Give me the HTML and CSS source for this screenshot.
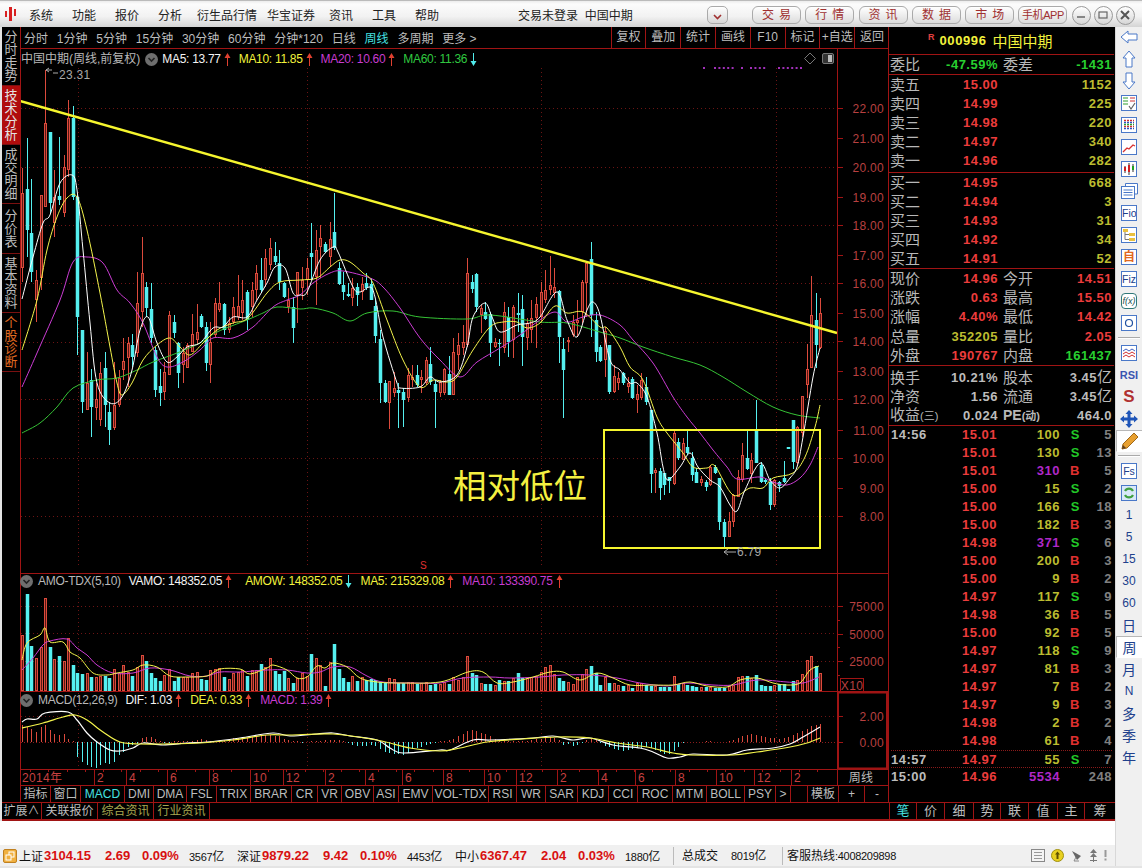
FILE: index.html
```html
<!DOCTYPE html>
<html>
<head>
    <title>中国中期 周线</title>
    <meta charset="utf-8">
    <link rel="stylesheet" href="styles.css">
</head>
<body>
    <svg class="defs">
        <symbol id="arrow-up" viewBox="0 0 7 13"><path d="M3.5 0 L6.5 5 H4 V13 H3 V5 H0.5 Z"/></symbol>
        <symbol id="arrow-down" viewBox="0 0 7 13"><path d="M3 0 H4 V8 H6.5 L3.5 13 L0.5 8 H3 Z"/></symbol>
        <symbol id="fold" viewBox="0 0 13 13"><circle cx="6.5" cy="6.5" r="6.5" fill="#6e6e6e"/><path d="M3.5 5 L6.5 8 L9.5 5" fill="none" stroke="#222" stroke-width="1.6"/></symbol>
    </svg>

    <header class="titlebar">
        <svg class="logo" width="12" height="14" viewBox="0 0 12 14">
            <rect x="0" y="4" width="2" height="6" fill="#d82020"/>
            <rect x="4" y="0" width="3" height="14" fill="#d82020"/>
            <rect x="9" y="2" width="2" height="7" fill="#d82020"/>
        </svg>
        <nav class="menu">
            <span>系统</span><span>功能</span><span>报价</span><span>分析</span><span>衍生品行情</span><span>华宝证券</span><span>资讯</span><span>工具</span><span>帮助</span>
        </nav>
        <div class="login">交易未登录&nbsp;&nbsp;中国中期</div>
        <button class="drop"><svg width="9" height="6" viewBox="0 0 9 6"><path d="M1 1 L4.5 4.5 L8 1" fill="none" stroke="#a03030" stroke-width="1.6"/></svg></button>
        <div class="top-btns">
            <button class="top-btn spaced">交易</button>
            <button class="top-btn spaced">行情</button>
            <button class="top-btn spaced">资讯</button>
            <button class="top-btn spaced">数据</button>
            <button class="top-btn spaced">市场</button>
            <button class="top-btn phone">手机APP</button>
            <button class="win-btn">
                <svg width="10" height="10" viewBox="0 0 10 10"><path d="M1 7 H9" stroke="#666" stroke-width="1.5"/></svg>
            </button>
            <button class="win-btn">
                <svg width="10" height="10" viewBox="0 0 10 10"><rect x="1" y="2" width="8" height="6" fill="none" stroke="#666" stroke-width="1.2"/></svg>
            </button>
            <button class="win-btn">
                <svg width="10" height="10" viewBox="0 0 10 10"><path d="M1 1 L9 9 M9 1 L1 9" stroke="#555" stroke-width="2"/></svg>
            </button>
        </div>
    </header>

    <div class="body-row">
        <div class="left-col">
            <div class="terminal">
                <aside class="side-tabs">
                    <div class="side-tab">分时走势</div>
                    <div class="side-tab active">技术分析</div>
                    <div class="side-tab">成交明细</div>
                    <div class="side-tab short">分价表</div>
                    <div class="side-tab">基本资料</div>
                    <div class="side-tab orange">个股诊断</div>
                </aside>

                <main class="chart-col">
                    <div class="periods">
                        <div class="period-list">
                            <span>分时</span><span>1分钟</span><span>5分钟</span><span>15分钟</span><span>30分钟</span><span>60分钟</span><span>分钟*120</span><span>日线</span><span class="cyan">周线</span><span>多周期</span><span>更多 &gt;</span>
                        </div>
                        <div class="period-tools">
                            <span>复权</span><span>叠加</span><span>统计</span><span>画线</span><span>F10</span><span>标记</span><span>+自选</span><span>返回</span>
                        </div>
                    </div>

                    <div class="plot">
                        <svg id="chart" class="chart" width="869" height="737" viewBox="20 49 869 737"></svg>

                        <div class="legend main-legend">
                            <span class="gray title">中国中期(周线,前复权)</span>
                            <svg class="fold"><use href="#fold"/></svg>
                            <span class="white item">MA5: 13.77<svg class="arr red-fill"><use href="#arrow-up"/></svg></span>
                            <span class="yellow item">MA10: 11.85<svg class="arr red-fill"><use href="#arrow-up"/></svg></span>
                            <span class="magenta item">MA20: 10.60<svg class="arr red-fill"><use href="#arrow-up"/></svg></span>
                            <span class="green item">MA60: 11.36<svg class="arr cyan-fill"><use href="#arrow-down"/></svg></span>
                        </div>

                        <div class="legend vol-legend">
                            <svg class="fold"><use href="#fold"/></svg>
                            <span class="gray">AMO-TDX(5,10)</span>
                            <span class="white item">VAMO: 148352.05<svg class="arr red-fill"><use href="#arrow-up"/></svg></span>
                            <span class="yellow item wide">AMOW: 148352.05<svg class="arr cyan-fill"><use href="#arrow-down"/></svg></span>
                            <span class="yellow item">MA5: 215329.08<svg class="arr red-fill"><use href="#arrow-up"/></svg></span>
                            <span class="magenta item">MA10: 133390.75<svg class="arr red-fill"><use href="#arrow-up"/></svg></span>
                        </div>

                        <div class="legend macd-legend">
                            <svg class="fold"><use href="#fold"/></svg>
                            <span class="gray">MACD(12,26,9)</span>
                            <span class="white item">DIF: 1.03<svg class="arr red-fill"><use href="#arrow-up"/></svg></span>
                            <span class="yellow item">DEA: 0.33<svg class="arr red-fill"><use href="#arrow-up"/></svg></span>
                            <span class="magenta item">MACD: 1.39<svg class="arr red-fill"><use href="#arrow-up"/></svg></span>
                        </div>

                        <div class="note">相对低位</div>
                    </div>

                    <div class="indicators">
                        <span>指标</span><span>窗口</span><span class="cyan">MACD</span><span>DMI</span><span>DMA</span><span>FSL</span><span>TRIX</span><span>BRAR</span><span>CR</span><span>VR</span><span>OBV</span><span>ASI</span><span>EMV</span><span>VOL-TDX</span><span>RSI</span><span>WR</span><span>SAR</span><span>KDJ</span><span>CCI</span><span>ROC</span><span>MTM</span><span>BOLL</span><span>PSY</span><span>&gt;</span><span></span><span>模板</span><span>+</span><span>-</span>
                    </div>
                </main>

                <section class="quote">
                    <div class="q-head"><sup>R</sup><b>000996</b><span>中国中期</span></div>

                    <div class="q-block ratio">
                        <div class="q-row"><label>委比</label><b class="up-g">-47.59%</b><label class="r">委差</label><b class="up-g">-1431</b></div>
                    </div>

                    <div class="q-block sell">
                        <div class="q-row"><label>卖五</label><b class="red">15.00</b><i></i><b class="olive">1152</b></div>
                        <div class="q-row"><label>卖四</label><b class="red">14.99</b><i></i><b class="olive">225</b></div>
                        <div class="q-row"><label>卖三</label><b class="red">14.98</b><i></i><b class="olive">220</b></div>
                        <div class="q-row"><label>卖二</label><b class="red">14.97</b><i></i><b class="olive">340</b></div>
                        <div class="q-row"><label>卖一</label><b class="red">14.96</b><i></i><b class="olive">282</b></div>
                    </div>

                    <div class="q-block buy">
                        <div class="q-row"><label>买一</label><b class="red">14.95</b><i></i><b class="olive">668</b></div>
                        <div class="q-row"><label>买二</label><b class="red">14.94</b><i></i><b class="olive">3</b></div>
                        <div class="q-row"><label>买三</label><b class="red">14.93</b><i></i><b class="olive">31</b></div>
                        <div class="q-row"><label>买四</label><b class="red">14.92</b><i></i><b class="olive">34</b></div>
                        <div class="q-row"><label>买五</label><b class="red">14.91</b><i></i><b class="olive">52</b></div>
                    </div>

                    <div class="q-block stats">
                        <div class="q-row"><label>现价</label><b class="red">14.96</b><label class="r">今开</label><b class="red">14.51</b></div>
                        <div class="q-row"><label>涨跌</label><b class="red">0.63</b><label class="r">最高</label><b class="red">15.50</b></div>
                        <div class="q-row"><label>涨幅</label><b class="red">4.40%</b><label class="r">最低</label><b class="red">14.42</b></div>
                        <div class="q-row"><label>总量</label><b class="olive">352205</b><label class="r">量比</label><b class="red">2.05</b></div>
                        <div class="q-row"><label>外盘</label><b class="red">190767</b><label class="r">内盘</label><b class="up-g">161437</b></div>
                    </div>

                    <div class="q-block funds">
                        <div class="q-row"><label>换手</label><b class="silver">10.21%</b><label class="r">股本</label><b class="silver">3.45<em>亿</em></b></div>
                        <div class="q-row"><label>净资</label><b class="silver">1.56</b><label class="r">流通</label><b class="silver">3.45<em>亿</em></b></div>
                        <div class="q-row"><label>收益<small>(三)</small></label><b class="silver">0.024</b><label class="r pe">PE<small>(动)</small></label><b class="silver">464.0</b></div>
                    </div>

                    <div class="trades">
                        <div class="t-row"><span class="t">14:56</span><b class="red">15.01</b><b class="olive">100</b><b class="s">S</b><b class="c">5</b></div>
                        <div class="t-row"><span class="t"></span><b class="red">15.01</b><b class="olive">130</b><b class="s">S</b><b class="c">13</b></div>
                        <div class="t-row"><span class="t"></span><b class="red">15.01</b><b class="purple">310</b><b class="b">B</b><b class="c">5</b></div>
                        <div class="t-row"><span class="t"></span><b class="red">15.00</b><b class="olive">15</b><b class="s">S</b><b class="c">2</b></div>
                        <div class="t-row"><span class="t"></span><b class="red">15.00</b><b class="olive">166</b><b class="s">S</b><b class="c">18</b></div>
                        <div class="t-row"><span class="t"></span><b class="red">15.00</b><b class="olive">182</b><b class="b">B</b><b class="c">3</b></div>
                        <div class="t-row"><span class="t"></span><b class="red">14.98</b><b class="purple">371</b><b class="s">S</b><b class="c">6</b></div>
                        <div class="t-row"><span class="t"></span><b class="red">15.00</b><b class="olive">200</b><b class="b">B</b><b class="c">3</b></div>
                        <div class="t-row"><span class="t"></span><b class="red">15.00</b><b class="olive">9</b><b class="b">B</b><b class="c">2</b></div>
                        <div class="t-row"><span class="t"></span><b class="red">14.97</b><b class="olive">117</b><b class="s">S</b><b class="c">9</b></div>
                        <div class="t-row"><span class="t"></span><b class="red">14.98</b><b class="olive">36</b><b class="b">B</b><b class="c">5</b></div>
                        <div class="t-row"><span class="t"></span><b class="red">15.00</b><b class="olive">92</b><b class="b">B</b><b class="c">5</b></div>
                        <div class="t-row"><span class="t"></span><b class="red">14.97</b><b class="olive">118</b><b class="s">S</b><b class="c">9</b></div>
                        <div class="t-row"><span class="t"></span><b class="red">14.97</b><b class="olive">81</b><b class="b">B</b><b class="c">3</b></div>
                        <div class="t-row"><span class="t"></span><b class="red">14.97</b><b class="olive">7</b><b class="b">B</b><b class="c">2</b></div>
                        <div class="t-row"><span class="t"></span><b class="red">14.97</b><b class="olive">9</b><b class="b">B</b><b class="c">3</b></div>
                        <div class="t-row"><span class="t"></span><b class="red">14.98</b><b class="olive">2</b><b class="b">B</b><b class="c">2</b></div>
                        <div class="t-row"><span class="t"></span><b class="red">14.98</b><b class="olive">61</b><b class="b">B</b><b class="c">4</b></div>
                        <div class="t-row dotted"><span class="t">14:57</span><b class="red">14.97</b><b class="olive">55</b><b class="s">S</b><b class="c">7</b></div>
                        <div class="t-row"><span class="t">15:00</span><b class="red">14.96</b><b class="purple">5534</b><b class="s"></b><b class="c">248</b></div>
                    </div>
                </section>
            </div>

            <div class="lower-tabs">
                <div class="ext-tabs">
                    <span>扩展∧</span><span>关联报价</span><span class="khaki">综合资讯</span><span class="khaki">行业资讯</span>
                </div>
                <div class="quote-tabs">
                    <span class="cyan">笔</span><span>价</span><span>细</span><span>势</span><span>联</span><span>值</span><span>主</span><span>筹</span>
                </div>
            </div>

            <div class="blank"></div>

            <footer class="status">
                <svg class="st-icon" width="14" height="14" viewBox="0 0 14 14">
                    <rect x="0.5" y="0.5" width="13" height="13" rx="1.5" fill="#f0b040" stroke="#c08020"/>
                    <rect x="6" y="3" width="5" height="5" fill="none" stroke="#fff"/>
                    <rect x="3" y="6" width="5" height="5" fill="#f0b040" stroke="#fff"/>
                </svg>
                <div class="idx"><span>上证</span><b>3104.15</b><b>2.69</b><b>0.09%</b><span class="amt">3567<em>亿</em></span></div>
                <div class="idx"><span>深证</span><b>9879.22</b><b>9.42</b><b>0.10%</b><span class="amt">4453<em>亿</em></span></div>
                <div class="idx"><span>中小</span><b>6367.47</b><b>2.04</b><b>0.03%</b><span class="amt">1880<em>亿</em></span></div>
                <div class="total"><span>总成交</span><span class="amt">8019<em>亿</em></span></div>
                <div class="hotline"><span>客服热线</span><span class="amt">:4008209898</span></div>
                <div class="st-tray">
                    <svg width="14" height="13" viewBox="0 0 14 13">
                        <rect x="0.5" y="0.5" width="13" height="12" fill="#f4f4f4" stroke="#888"/>
                        <path d="M3 3.5 H11 M3 6.5 H11 M3 9.5 H11" stroke="#999"/>
                    </svg>
                    <svg width="13" height="13" viewBox="0 0 13 13">
                        <circle cx="6.5" cy="6.5" r="6" fill="#e8d020" stroke="#a09010"/>
                        <path d="M6.5 2.5 L9 5.5 H7.5 V10 H5.5 V5.5 H4 Z" fill="#605000"/>
                    </svg>
                    <svg width="13" height="13" viewBox="0 0 13 13">
                        <path d="M2 2 L11 7 L7 11 Z" fill="#666"/>
                        <path d="M6 8 L4 12 H9" fill="none" stroke="#888"/>
                    </svg>
                    <svg width="9" height="13" viewBox="0 0 9 13">
                        <path d="M4.5 0 L8 4 H1 Z M4.5 4 L8 8 H1 Z M4 8 H5 V13 H4 Z M1 11 H8 V12 H1 Z" fill="#777"/>
                    </svg>
                    <svg width="3" height="11" viewBox="0 0 3 11">
                        <path d="M0.5 0 H2.5 V7 H0.5 Z M0.5 8.5 H2.5 V10.5 H0.5 Z" fill="#999"/>
                    </svg>
                </div>
            </footer>
        </div>

        <aside class="toolbar">
            <div class="tool"><svg width="18" height="16" viewBox="0 0 18 16"><path d="M1 8 L8 2 V5 H17 V11 H8 V14 Z" fill="#fff" stroke="#4a78c8"/></svg></div>
            <div class="tool"><svg width="16" height="18" viewBox="0 0 16 18"><path d="M8 1 L14 8 H11 V17 H5 V8 H2 Z" fill="#fff" stroke="#4a78c8"/></svg></div>
            <div class="tool"><svg width="16" height="18" viewBox="0 0 16 18"><path d="M8 17 L14 10 H11 V1 H5 V10 H2 Z" fill="#fff" stroke="#4a78c8"/></svg></div>
            <div class="tool"><svg width="16" height="16" viewBox="0 0 16 16"><rect x="0.5" y="0.5" width="15" height="15" fill="#fff" stroke="#4a78c8"/><path d="M2 3 H7 M2 6 H7 M2 9 H7" stroke="#30a030" stroke-width="1.2"/><path d="M9 3 H14 M9 6 H14" stroke="#d03030" stroke-width="1.2"/><path d="M8 11 L10 14 L14 8" fill="none" stroke="#606060" stroke-width="1.2"/></svg></div>
            <div class="tool"><svg width="16" height="16" viewBox="0 0 16 16"><rect x="0.5" y="0.5" width="15" height="15" fill="#fff" stroke="#4a78c8"/><path d="M3 3.5 H13 M3 9.5 H13" stroke="#d03030" stroke-width="1.5" stroke-dasharray="2 1"/><path d="M3 5.5 H13 M3 11.5 H13" stroke="#3050c0" stroke-width="1.5" stroke-dasharray="2 1"/><path d="M3 7.5 H13" stroke="#30a030" stroke-width="1.5" stroke-dasharray="2 1"/></svg></div>
            <div class="tool"><svg width="16" height="16" viewBox="0 0 16 16"><rect x="0.5" y="0.5" width="15" height="15" fill="#fff" stroke="#4a78c8"/><path d="M2 13 L6 9 L8 10 L12 6 L14 7" fill="none" stroke="#d83030" stroke-width="1.3"/></svg></div>
            <div class="tool"><svg width="16" height="16" viewBox="0 0 16 16"><rect x="0.5" y="0.5" width="15" height="15" fill="#fff" stroke="#4a78c8"/><path d="M4 5 V12 M8 2 V14 M12 3 V11" stroke="#333"/><rect x="3" y="6" width="2" height="4" fill="#d02020"/><rect x="7" y="4" width="2" height="7" fill="#d02020"/><rect x="11" y="5" width="2" height="4" fill="#20a020"/></svg></div>
            <div class="tool"><svg width="17" height="16" viewBox="0 0 17 16"><path d="M4.5 3 V0.5 H16.5 V11 H14" fill="#fff" stroke="#4a78c8"/><rect x="0.5" y="3.5" width="13" height="12" fill="#fff" stroke="#4a78c8"/><path d="M2.5 7 H11.5 M2.5 9.5 H11.5 M2.5 12 H11.5" stroke="#4a78c8"/></svg></div>
            <div class="tool"><span class="boxed">Fio</span></div>
            <div class="tool"><svg width="16" height="16" viewBox="0 0 16 16"><rect x="0.5" y="0.5" width="15" height="15" fill="#fff" stroke="#4a78c8"/><rect x="2" y="2" width="5" height="3" fill="#e8c040"/><rect x="8" y="6" width="6" height="3" fill="#e8c040"/><rect x="8" y="11" width="6" height="3" fill="#e8c040"/><path d="M4 5 V12.5 H8 M4 7.5 H8" fill="none" stroke="#777"/></svg></div>
            <div class="tool"><span class="boxed orange-text">自</span></div>
            <div class="tool"><span class="boxed">Fiz</span></div>
            <div class="tool"><span class="boxed fx">f(x)</span></div>
            <div class="tool"><svg width="16" height="16" viewBox="0 0 16 16"><rect x="0.5" y="0.5" width="15" height="15" fill="#fff" stroke="#4a78c8"/><circle cx="8" cy="8" r="3.5" fill="none" stroke="#2050a0" stroke-width="1.2"/></svg></div>
            <div class="tool-sep"></div>
            <div class="tool"><svg width="16" height="16" viewBox="0 0 16 16"><rect x="0.5" y="0.5" width="15" height="15" fill="#fff" stroke="#4a78c8"/><path d="M2 6 L5 4 L8 6 L11 4 L14 6" fill="none" stroke="#4060c0"/><path d="M2 9 L5 7 L8 9 L11 7 L14 9" fill="none" stroke="#d03030"/><path d="M2 12 L5 10 L8 12 L11 10 L14 12" fill="none" stroke="#d03030"/></svg></div>
            <div class="tool rsi">RSI</div>
            <div class="tool big-s">S</div>
            <div class="tool"><svg width="18" height="18" viewBox="0 0 18 18"><path d="M9 0 L12.5 4 H10.5 V7.5 H14 V5.5 L18 9 L14 12.5 V10.5 H10.5 V14 H12.5 L9 18 L5.5 14 H7.5 V10.5 H4 V12.5 L0 9 L4 5.5 V7.5 H7.5 V4 H5.5 Z" fill="#1f55b8"/></svg></div>
            <div class="tool pressed"><svg width="18" height="18" viewBox="0 0 18 18"><path d="M13 1 L17 5 L6 16 L1 17 L2 12 Z" fill="#e8a030" stroke="#a06818"/><path d="M1 17 L2 13 L5 16 Z" fill="#604020"/></svg></div>
            <div class="tool-sep"></div>
            <div class="tool"><span class="boxed">Fs</span></div>
            <div class="tool"><svg width="16" height="16" viewBox="0 0 16 16"><rect x="0.5" y="0.5" width="15" height="15" fill="#d8e8f8" stroke="#4a78c8"/><path d="M4 6 A4.5 4.5 0 0 1 12 6 M12 10 A4.5 4.5 0 0 1 4 10" fill="none" stroke="#40a040" stroke-width="2.2"/></svg></div>
            <div class="tool num">1</div>
            <div class="tool num">5</div>
            <div class="tool num">15</div>
            <div class="tool num">30</div>
            <div class="tool num">60</div>
            <div class="tool han">日</div>
            <div class="tool han pressed">周</div>
            <div class="tool han">月</div>
            <div class="tool num">N</div>
            <div class="tool han">多</div>
            <div class="tool han">季</div>
            <div class="tool han">年</div>
        </aside>
    </div>

    <script src="chart.js"></script>
</body>
</html>
```

FILE: styles.css
```css
* {
    box-sizing: border-box;
}
html, body {
    margin: 0;
    padding: 0;
}
body {
    width: 1142px;
    height: 868px;
    overflow: hidden;
    background-color: #e4e4e4;
    color: #bdbdbd;
    font-family: "Liberation Sans", "Noto Sans CJK SC", sans-serif;
    font-size: 12px;
}
.defs {
    display: none;
}
button {
    font-family: inherit;
    cursor: pointer;
}
em, i {
    font-style: normal;
}

/* top window bar */
.titlebar {
    height: 27px;
    display: grid;
    grid-template-columns: 29px 489px 189px 45px 1fr;
    align-items: center;
    background: linear-gradient(#ececec 0, #fcfcfc 3px, #f2f2f2 60%, #d4d4d4 100%);
    border-top: 1px solid #bbb;
    color: #222;
}
.logo {
    margin-left: 5px;
}
.menu {
    display: grid;
    grid-template-columns: 43px 43px 43px 39px 70px 62px 43px 43px auto;
}
.login {
    color: #222;
}
.drop {
    width: 21px;
    height: 18px;
    margin-top: 2px;
    padding: 0;
    border: 1px solid #aaa;
    border-radius: 5px;
    background: linear-gradient(#fff, #d8d8d8);
}
.top-btns {
    display: flex;
    align-items: center;
    margin-top: 2px;
}
.top-btn {
    width: 49px;
    height: 18px;
    margin-right: 4.3px;
    padding: 0;
    border: 1px solid #aaa;
    border-radius: 6px;
    background: linear-gradient(#fff, #dcdcdc);
    color: #a03030;
    font-size: 12px;
    line-height: 15px;
    white-space: nowrap;
}
.top-btn.spaced {
    letter-spacing: 5px;
    text-indent: 5px;
}
.top-btn.phone {
    font-size: 11px;
    letter-spacing: -0.4px;
}
.win-btn {
    width: 19px;
    height: 19px;
    margin-right: 3px;
    padding: 0;
    border: 1px solid #999;
    border-radius: 50%;
    background: linear-gradient(#fff, #d6d6d6);
    display: flex;
    align-items: center;
    justify-content: center;
}

/* page below the title bar */
.body-row {
    display: flex;
    height: 839px;
}
.left-col {
    width: 1115px;
    padding-left: 2px;
    display: flex;
    flex-direction: column;
}
.terminal {
    display: flex;
    height: 775px;
    background-color: #000;
}

.side-tabs {
    width: 18px;
    flex: none;
}
.side-tab {
    padding: 3px 2px;
    border-bottom: 1px solid #7a1010;
    font-size: 13px;
    line-height: 13px;
    color: #bdbdbd;
    text-align: center;
}
.side-tab.short {
    padding: 5px 2px;
}
.side-tab.active {
    background-color: #b00c0c;
    color: #e4e4e4;
}
.side-tab.orange {
    color: #e06a20;
}

.chart-col {
    width: 869px;
    flex: none;
    display: flex;
    flex-direction: column;
    border-left: 1px solid #a01414;
    margin-right: -1px;
}
.periods {
    height: 22px;
    display: flex;
    align-items: center;
    justify-content: space-between;
    border-bottom: 1px solid #a01414;
}
.period-list {
    display: flex;
    gap: 8.8px;
    padding-left: 3px;
}
.period-tools {
    display: flex;
    height: 100%;
}
.period-tools span {
    width: 34.8px;
    text-align: center;
    border-left: 1px solid #a01414;
    line-height: 21px;
}
.cyan {
    color: #45e0e0;
}
.plot {
    position: relative;
    height: 737px;
    margin-left: -1px;
}
.chart {
    display: block;
}
.legend {
    position: absolute;
    display: flex;
    align-items: center;
    white-space: nowrap;
    line-height: 16px;
    letter-spacing: -0.3px;
}
.main-legend {
    top: 2px;
    left: 1px;
}
.main-legend .title {
    letter-spacing: 0;
}
.vol-legend {
    top: 524px;
    left: 0;
}
.macd-legend {
    top: 643px;
    left: 0;
}
.legend .fold {
    width: 13px;
    height: 13px;
    margin: 0 0 0 5px;
}
.vol-legend .fold, .macd-legend .fold {
    margin: 0 5px 0 0;
}
.legend .item {
    display: inline-flex;
    align-items: center;
    margin-left: 4px;
    gap: 3px;
}
.vol-legend .item:nth-of-type(2), .macd-legend .item:nth-of-type(2) {
    margin-left: 8px;
}
.legend .item + .item {
    margin-left: 8px;
}
.legend .item.wide {
    margin-left: 13px;
}
.arr {
    width: 7px;
    height: 13px;
}
.red-fill { fill: #e04030; }
.cyan-fill { fill: #50eaea; }
.white { color: #f4f4f4; }
.gray { color: #b8b8b8; }
.yellow { color: #f2f23c; }
.magenta { color: #c83cd0; }
.green { color: #30c840; }
.note {
    position: absolute;
    left: 433px;
    top: 416px;
    font-size: 33.5px;
    line-height: 44px;
    color: #f4f040;
}

.indicators {
    height: 17px;
    display: grid;
    grid-template-columns: 30px 30px 44px 29px 33px 30px 34px 41px 26px 24px 32px 25px 34px 56px 28px 29px 32px 31px 29px 35px 34px 38px 31px 15px 17px 31px 26px 25px;
    margin-left: -1px;
}
.indicators span {
    text-align: center;
    line-height: 16px;
    border-left: 1px solid #a01414;
    white-space: nowrap;
    overflow: hidden;
}

/* quote column */
.quote {
    width: 226px;
    flex: none;
    display: flex;
    flex-direction: column;
    border-left: 1px solid #a01414;
    color: #b8b8b8;
}
.q-head {
    height: 28px;
    padding-left: 39px;
    display: flex;
    align-items: center;
    border-bottom: 1px solid #a01414;
    color: #f2f23c;
}
.q-head sup {
    color: #e04040;
    font-size: 9px;
    font-weight: bold;
    margin: -8px 5px 0 0;
}
.q-head b {
    font-size: 13px;
    letter-spacing: 0.6px;
    margin-right: 6px;
}
.q-head span {
    font-size: 15px;
}
.q-block {
    padding: 0 2px 0 1px;
    border-bottom: 1px solid #a01414;
}
.q-row {
    height: 19px;
    display: grid;
    grid-template-columns: 32px 76px 37px 1fr;
    align-items: center;
    line-height: 19px;
    white-space: nowrap;
}
.q-row label {
    font-size: 15px;
}
.q-row label.r {
    padding-left: 5px;
}
.q-row label small {
    font-size: 11px;
}
.q-row label.pe {
    font-size: 14px;
    font-weight: bold;
    color: #b8b8b8;
}
.q-row b {
    font-size: 13px;
    letter-spacing: 0.5px;
    text-align: right;
}
.q-row b em {
    font-size: 15px;
    font-weight: normal;
    letter-spacing: 0;
}
.ratio { height: 20px; }
.sell { height: 98px; }
.buy { height: 96px; }
.stats { height: 97px; }
.stats .q-row { height: 19.2px; }
.funds {
    height: 60px;
    padding-top: 1px;
}
.red { color: #ec3c3c; }
.olive { color: #bcbc30; }
.up-g { color: #28d030; }
.silver { color: #bcbcbc; }
.purple { color: #b028c8; }

.trades {
    flex: 1;
    padding: 0 2px 0 2px;
}
.t-row {
    height: 18px;
    display: grid;
    grid-template-columns: 36px 70px 63px 20px 1fr;
    align-items: center;
    line-height: 18px;
    font-size: 13px;
    letter-spacing: 0.5px;
}
.t-row b {
    text-align: right;
}
.t-row.dotted {
    border-top: 1px dotted #8a1a1a;
    border-bottom: 1px dotted #8a1a1a;
}
.t {
    color: #bcbcbc;
    font-weight: bold;
}
.t-row .s { color: #22c828; }
.t-row .b { color: #e03030; }
.t-row .c { color: #808080; }

/* rows under the chart */
.lower-tabs {
    height: 19px;
    display: flex;
    background-color: #000;
    border-top: 1px solid #a01414;
    border-bottom: 2px solid #a01414;
}
.ext-tabs {
    width: 887px;
    display: flex;
}
.ext-tabs span {
    width: 56px;
    text-align: center;
    line-height: 16px;
    white-space: nowrap;
    border-right: 1px solid #a01414;
}
.ext-tabs span:first-child {
    width: 40px;
}
.khaki {
    color: #a8a850;
}
.quote-tabs {
    flex: 1;
    display: grid;
    grid-template-columns: 27px 28px 29px 27px 28px 29px 27px 1fr;
}
.quote-tabs span {
    text-align: center;
    line-height: 16px;
    font-size: 13px;
    border-left: 1px solid #a01414;
}
.blank {
    height: 24px;
    background-color: #fff;
    margin-left: -2px;
}
.status {
    height: 21px;
    display: flex;
    align-items: center;
    background-color: #f0f0f0;
    color: #111;
    margin-left: -2px;
    padding-left: 3px;
}
.st-icon {
    flex: none;
    margin-right: 2px;
}
.idx {
    width: 218px;
    flex: none;
    display: grid;
    grid-template-columns: 25px 61px 37px 47px 1fr;
    align-items: center;
    font-size: 12px;
}
.idx b {
    color: #d81010;
    font-size: 13px;
}
.amt {
    font-size: 11px;
    letter-spacing: -0.3px;
}
.amt em {
    font-size: 12px;
}
.total {
    width: 109px;
    flex: none;
    display: grid;
    grid-template-columns: 49px 1fr;
    padding-left: 8px;
    border-left: 1px solid #bbb;
    line-height: 18px;
}
.hotline {
    flex: none;
    padding-left: 4px;
    border-left: 1px solid #bbb;
    line-height: 18px;
}
.st-tray {
    margin-left: auto;
    margin-right: 8px;
    display: flex;
    align-items: center;
    gap: 6px;
}

/* narrow icon bar on the right */
.toolbar {
    width: 27px;
    flex: none;
    display: flex;
    flex-direction: column;
    background-color: #f0f0f0;
    border-left: 1px solid #d8d8d8;
}
.tool {
    height: 22px;
    flex: none;
    display: flex;
    align-items: center;
    justify-content: center;
    color: #20408c;
}
.tool:first-child {
    margin-top: -1px;
}
.tool-sep {
    height: 2px;
    flex: none;
    margin: 3px 2px;
    border-top: 1px solid #aaa;
    border-bottom: 1px solid #fff;
}
.tool.pressed {
    background-color: #fff;
    border: 1px solid #b8b8b8;
    border-right: 0;
    border-bottom-color: #fff;
}
.boxed {
    width: 16px;
    height: 16px;
    border: 1px solid #4a78c8;
    background-color: #fff;
    color: #20408c;
    font-size: 10.5px;
    line-height: 14px;
    text-align: center;
    overflow: hidden;
}
.boxed.orange-text {
    color: #e06820;
    font-size: 12px;
    font-weight: bold;
}
.boxed.fx {
    border-color: #307878;
    border-radius: 4px;
    font-style: italic;
    font-size: 9px;
    color: #205050;
}
.rsi {
    font-size: 11px;
    font-weight: bold;
    color: #3a55b0;
}
.big-s {
    font-size: 17px;
    font-weight: bold;
    color: #b03030;
}
.num {
    font-size: 12px;
}
.han {
    font-size: 14px;
}
```

FILE: chart.js
```js
// weekly chart drawn into #chart, all coordinates are page pixels
var svg = document.getElementById("chart");
var NS = "http://www.w3.org/2000/svg";

var X0 = 22.3, STEP = 4.586;
var LINE = "#a01414", GRID = "#6c1414", UP = "#dc4a3c", UP_FILL = "#5a1812", DOWN = "#55f0f0";

// [up, body top, body bottom, high, low]
var candles = [
    [1,193,268,168,282],[0,189,230,138,257],[0,233,272,179,282],[1,280,300,270,322],[1,195,278,195,290],
    [1,123,207,70,207],[0,132,203,132,213],[1,197,223,170,237],[0,196,200,137,205],[1,167,213,155,217],
    [1,118,170,100,177],[0,118,197,106,200],[0,197,317,195,355],[0,330,402,330,413],[1,383,410,352,410],
    [0,380,407,369,437],[1,399,408,383,420],[1,373,420,362,426],[0,368,405,352,427],[0,412,430,402,445],
    [1,405,428,362,430],[1,378,405,370,407],[1,361,370,338,380],[1,343,358,337,387],[0,345,357,334,367],
    [1,303,353,272,357],[1,273,312,237,327],[0,287,308,282,317],[0,309,338,283,343],[0,350,390,347,397],
    [0,386,393,369,406],[1,372,392,362,400],[1,315,375,311,375],[0,322,333,315,338],[0,343,373,342,388],
    [1,353,365,347,383],[1,345,368,343,368],[1,334,352,314,352],[1,332,340,304,345],[0,316,327,314,328],
    [0,327,363,322,371],[1,342,365,322,383],[1,303,335,298,338],[1,303,310,282,312],[0,304,330,303,335],
    [1,323,330,317,333],[1,307,322,297,324],[1,306,317,275,320],[1,300,313,280,320],[0,292,320,290,330],
    [1,290,307,282,317],[1,273,290,265,300],[0,280,290,258,293],[1,258,280,249,287],[1,248,265,238,270],
    [0,256,262,242,265],[0,263,282,250,290],[0,283,297,282,298],[1,300,307,288,313],[0,307,328,297,343],
    [1,272,295,272,323],
    [1,280,288,267,300],[1,268,280,258,295],[0,253,257,223,280],[1,250,277,230,305],[1,238,247,225,278],
    [0,244,252,242,253],[1,239,257,222,267],[0,232,248,193,250],[0,268,284,262,285],[0,285,292,272,300],
    [0,294,296,283,297],[1,288,298,278,306],[0,287,295,283,306],[1,284,292,277,300],[0,283,288,273,290],
    [0,284,300,278,300],[0,306,336,300,343],[0,339,383,330,403],[0,383,402,380,403],[1,381,403,381,429],
    [1,388,393,372,397],[0,390,393,383,428],[0,392,400,388,427],[1,375,398,368,402],[1,377,380,365,387],
    [0,375,385,365,387],[1,377,380,370,393],[1,360,383,357,385],[0,364,382,347,385],[0,384,392,380,428],
    [1,382,393,380,397],[1,369,393,368,395],[0,374,395,356,395],[1,352,395,338,395],[1,345,355,333,370],
    [1,342,348,325,355],[1,273,345,258,347],[0,282,289,275,293],[0,274,307,273,312],[1,308,315,305,333],
    [0,312,319,302,320],[0,314,343,312,357],[1,342,347,338,348],[0,343,344,339,366],[1,312,348,302,353],
    [0,317,342,307,357],[1,307,340,305,358],[0,313,315,293,332],[0,309,337,295,366],[1,323,338,318,350],
    [1,318,330,300,343],[1,304,318,297,348],[1,292,317,282,323],[1,290,300,270,303],[1,285,290,256,295],
    [1,287,293,268,298],[0,291,337,290,363],[0,349,370,338,418],[1,340,342,337,352],[1,322,335,315,337],
    [1,320,323,300,337],[1,282,312,280,323],[1,263,283,262,317],[0,259,315,242,337],[0,320,352,312,362],
    [0,347,361,345,362],[1,331,360,327,377],[0,345,392,345,394],[1,376,392,365,393],[1,378,383,372,390],
    [0,373,383,372,385],[1,383,387,377,393],[0,379,398,377,399],[1,394,400,385,413],[1,380,398,373,400],
    [0,387,402,377,405],[0,410,474,410,493],[1,470,473,468,493],[0,471,488,468,500],[0,473,485,473,495],
    [0,477,481,477,493],[1,433,484,430,485],[0,442,458,438,460],[1,443,460,438,460],[0,447,453,430,455],
    [0,458,475,452,481],[0,472,483,468,483],[1,479,483,476,486],[0,482,487,480,491],[1,467,485,465,486],
    [0,467,473,465,474],[0,478,522,478,530],[0,522,537,519,548],[1,521,537,512,537],[1,495,522,494,527],
    [1,477,497,470,497],[1,455,480,443,482],[0,458,469,430,470],[1,460,474,453,483],[0,430,463,400,463],
    [0,465,482,462,483],[0,480,482,478,484],[0,482,505,478,510],[1,480,505,479,507],[0,482,486,481,492],
    [0,478,482,461,483],[0,447,449,447,449],[0,420,462,420,469],[1,427,463,426,465],[1,396,433,396,437],
    [1,369,385,344,398],[1,315,368,276,368],[0,320,345,293,368],[1,313,348,298,349]
];

var volumes = [
    55,97,45,32,43,92,44,31,35,29,52,26,18,17,17,14,13,14,15,13,21,17,25,18,15,23,35,30,18,13,
    10,15,21,10,14,13,13,17,18,12,11,20,21,22,14,11,17,18,20,15,20,20,27,23,32,20,17,20,12,8,
    12,17,14,37,32,25,5,28,47,22,13,9,14,10,13,11,12,11,9,9,12,11,8,8,8,8,7,7,8,6,7,6,
    8,7,13,10,13,34,18,16,7,7,7,5,11,9,10,12,18,13,12,13,14,18,23,25,16,13,10,8,6,13,16,21,25,18,
    6,13,8,7,5,5,5,3,7,7,6,5,4,4,4,4,14,7,7,6,5,4,3,4,3,3,3,3,4,5,13,14,15,12,16,6,5,5,5,7,7,2,
    10,10,16,30,34,25,17
];

var macdBars = [
    17,15,13,10,15,17,12,8,7,8,3,1,
    -15,-20,-23,-25,-26,-23,-21,-22,-20,-13,-10,-5,-3,-2,
    4,5,5,3,1,-1,-1,1,1,1,1,1,2,3,
    2,1,1,1,2,3,4,4,3,4,5,6,6,7,7,6,6,3,2,1,
    1,-1,0,1,1,1,2,2,2,2,
    1,-1,-3,-4,-4,-4,-3,-4,-7,-10,
    -11,-12,-12,-13,-11,-7,-6,-5,-3,-2,-1,
    1,1,2,3,6,8,11,12,11,9,8,6,3,1,1,1,1,1,1,1,
    2,3,3,4,5,4,2,-3,-2,-4,-3,-1,2,3,2,
    -1,-4,-5,-7,-8,-9,-8,-7,-6,-6,-5,-6,-8,-10,-12,-12,-9,-5,-1,
    0,0,0,0,1,1,0,0,0,1,2,4,6,7,8,7,6,5,4,4,3,4,5,7,9,11,13,16,17,18
];

var ma5 = [[22,299],[33,257],[43,223],[50,215],[60,183],[72,175],[77,190],[83,250],[90,323],[97,383],[110,403],[122,397],[132,370],[140,330],[148,317],[157,343],[167,362],[177,357],[187,347],[200,343],[213,328],[223,327],[233,317],[247,317],[257,300],[267,283],[275,267],[285,268],[293,293],[300,295],[307,292],[320,260],[333,247],[338,252],[353,287],[360,292],[370,287],[375,297],[383,337],[397,383],[400,388],[420,387],[430,377],[440,382],[457,375],[467,347],[473,317],[485,303],[492,317],[500,332],[517,325],[530,323],[540,317],[557,292],[567,320],[577,337],[587,310],[593,302],[600,315],[610,360],[620,370],[630,383],[637,383],[647,397],[657,433],[663,467],[668,480],[680,467],[690,453],[698,467],[710,480],[720,487],[730,505],[737,511],[745,490],[760,463],[770,480],[780,488],[790,478],[797,467],[803,437],[813,377],[820,348]];
var ma10 = [[22,350],[37,300],[47,250],[57,217],[67,198],[77,197],[87,230],[100,293],[110,347],[117,383],[122,395],[132,383],[143,360],[157,345],[170,338],[180,347],[190,355],[203,343],[217,330],[233,323],[248,318],[267,293],[280,282],[300,280],[317,278],[330,267],[340,260],[350,262],[363,273],[373,283],[387,320],[403,360],[420,387],[433,380],[447,382],[457,377],[473,350],[490,327],[503,322],[517,322],[527,328],[540,323],[555,306],[567,313],[583,312],[600,327],[607,328],[620,347],[630,367],[643,380],[657,417],[667,433],[683,453],[693,467],[707,468],[715,466],[733,495],[750,488],[763,488],[773,478],[793,473],[805,457],[815,427],[820,405]];
var ma20 = [[22,387],[37,353],[60,300],[73,262],[87,257],[103,263],[117,290],[130,303],[143,323],[157,357],[167,367],[183,362],[200,350],[213,338],[233,338],[253,327],[273,307],[287,300],[300,295],[313,283],[330,273],[343,271],[370,278],[383,287],[400,308],[420,338],[440,360],[460,377],[477,362],[500,348],[520,335],[537,322],[555,312],[567,322],[583,317],[600,315],[620,325],[633,340],[653,363],[673,397],[687,417],[700,433],[713,450],[727,467],[737,479],[760,477],[773,482],[787,485],[800,478],[810,465],[818,447]];
var ma60 = [[22,433],[40,423],[57,407],[73,388],[97,380],[117,378],[137,370],[153,362],[177,353],[200,343],[217,332],[247,320],[263,313],[277,307],[300,309],[313,308],[333,313],[350,321],[367,313],[393,311],[420,317],[467,319],[490,315],[540,322],[567,323],[600,332],[620,338],[643,347],[673,357],[700,365],[723,377],[747,392],[773,407],[797,415],[820,418]];

var volYellow = [[22,660],[27,643],[40,635],[45,628],[50,642],[63,642],[70,652],[80,658],[93,673],[107,675],[117,673],[133,670],[143,665],[157,667],[170,676],[187,677],[207,676],[220,669],[240,669],[250,674],[267,668],[273,665],[287,670],[297,678],[307,677],[317,666],[325,668],[333,663],[347,667],[360,678],[377,682],[400,683],[440,682],[468,672],[483,672],[497,683],[513,682],[533,677],[550,672],[563,672],[580,680],[597,673],[613,678],[630,685],[653,685],[673,685],[690,682],[707,686],[727,687],[740,680],[757,678],[773,683],[787,685],[800,683],[810,670],[819,666]];
var volMagenta = [[22,670],[33,658],[43,645],[50,641],[67,639],[77,648],[87,655],[97,665],[113,673],[133,673],[150,668],[170,670],[190,676],[207,676],[220,672],[240,672],[267,670],[287,670],[307,673],[320,672],[333,667],[350,667],[367,676],[383,682],[417,683],[440,683],[463,678],[490,677],[510,678],[540,677],[563,675],[590,675],[617,678],[640,683],[667,686],[687,683],[713,685],[733,685],[757,680],[787,682],[803,683],[819,677]];

var dif = [[22,722],[27,719],[37,719],[45,713],[68,712],[77,720],[87,733],[97,742],[110,750],[120,751],[133,748],[143,743],[163,745],[187,743],[207,742],[240,738],[273,733],[290,736],[317,734],[333,733],[350,736],[377,740],[390,748],[403,753],[440,750],[450,750],[473,740],[490,740],[533,738],[553,736],[573,740],[590,738],[613,745],[640,748],[653,752],[667,758],[680,757],[693,754],[727,755],[747,750],[773,748],[790,744],[803,737],[820,727]];
var dea = [[22,728],[43,723],[63,717],[75,715],[87,720],[103,732],[120,742],[140,744],[163,744],[200,743],[233,740],[267,735],[290,735],[333,734],[377,740],[410,748],[440,751],[460,748],[487,742],[523,739],[557,737],[590,738],[617,743],[647,747],[673,753],[690,755],[733,755],[757,752],[790,747],[807,743],[820,738]];

function add(name, attrs, parent) {
    var el = document.createElementNS(NS, name);
    for (var key in attrs) {
        el.setAttribute(key, attrs[key]);
    }
    (parent || svg).appendChild(el);
    return el;
}

function line(x1, y1, x2, y2, color, extra) {
    var attrs = { x1: x1, y1: y1, x2: x2, y2: y2, stroke: color };
    for (var key in extra) {
        attrs[key] = extra[key];
    }
    return add("line", attrs);
}

function text(x, y, str, color, anchor) {
    var el = add("text", { x: x, y: y, fill: color, "text-anchor": anchor || "end", "font-size": 12, "letter-spacing": 0.3 });
    el.textContent = str;
    return el;
}

// smooth curve through the points
function curve(points, color, width) {
    var d = "M" + points[0][0] + " " + points[0][1];
    for (var i = 0; i < points.length - 1; i++) {
        var p0 = points[i - 1] || points[i], p1 = points[i], p2 = points[i + 1], p3 = points[i + 2] || p2;
        var c1x = p1[0] + (p2[0] - p0[0]) / 6, c1y = p1[1] + (p2[1] - p0[1]) / 6;
        var c2x = p2[0] - (p3[0] - p1[0]) / 6, c2y = p2[1] - (p3[1] - p1[1]) / 6;
        d += " C" + c1x.toFixed(1) + " " + c1y.toFixed(1) + " " + c2x.toFixed(1) + " " + c2y.toFixed(1) + " " + p2[0] + " " + p2[1];
    }
    add("path", { d: d, fill: "none", stroke: color, "stroke-width": width || 1 });
}

function xAt(i) {
    return Math.round(X0 + STEP * i);
}

// grid
var dotted = { "stroke-dasharray": "1 3" };
[108, 167, 225, 283, 342, 399, 458, 516, 606, 633, 661, 716].forEach(function (y) {
    line(21, y + 0.5, 837, y + 0.5, GRID, dotted);
});
line(21, 742.5, 837, 742.5, "#8c1c1c", { "stroke-dasharray": "1 2" });
[78, 307, 541, 776].forEach(function (x) {
    line(x + 0.5, 68, x + 0.5, 566, GRID, dotted);
    line(x + 0.5, 590, x + 0.5, 690, GRID, dotted);
    line(x + 0.5, 693, x + 0.5, 768, GRID, dotted);
});

// price pane
candles.forEach(function (c, i) {
    var x = xAt(i);
    var color = c[0] ? UP : DOWN;
    line(x + 0.5, c[3], x + 0.5, c[4], color);
    if (c[0]) {
        add("rect", { x: x - 0.5, y: c[1] + 0.5, width: 2, height: Math.max(c[2] - c[1] - 1, 0.5), fill: UP_FILL, stroke: color });
    } else {
        add("rect", { x: x - 1.25, y: c[1], width: 3.5, height: Math.max(c[2] - c[1], 1), fill: color });
    }
});
curve(ma60, "#36c436");
curve(ma20, "#cc3cd4");
curve(ma10, "#f4f44c");
curve(ma5, "#ffffff");

// trend line and the low area box
line(20, 101, 837, 333, "#f6f62e", { "stroke-width": 2.4 });
add("rect", { x: 604, y: 430, width: 216, height: 118, fill: "none", stroke: "#f6f62e", "stroke-width": 2 });

// high / low marks
add("path", { d: "M46 70 L52 70 M46 70 L49 68 M46 70 L49 72 M53 73 L58 73", fill: "none", stroke: "#aaa" });
text(59, 79, "23.31", "#a8a8a8", "start");
add("path", { d: "M724 552 H736 M724 552 L728 549 M724 552 L728 555", fill: "none", stroke: "#aaa" });
text(737, 556, "6.79", "#a8a8a8", "start");
text(427, 569, "S", "#e03030").setAttribute("font-size", 10);

// purple dots along the top
[[703, 1], [714, 5], [741, 1], [750, 4], [778, 6]].forEach(function (g) {
    for (var k = 0; k < g[1]; k++) {
        add("rect", { x: g[0] + k * 4.4, y: 67, width: 2, height: 2, fill: "#a030b8" });
    }
});
add("path", { d: "M810 53 L815.5 58.5 L810 64 L804.5 58.5 Z", fill: "none", stroke: "#777" });
add("rect", { x: 822.5, y: 53.5, width: 11, height: 10, rx: 1.5, fill: "#333", stroke: "#777" });
add("rect", { x: 828, y: 55, width: 4, height: 7, fill: "#bbb" });

// volume pane
volumes.forEach(function (h, i) {
    var x = xAt(i);
    var up = candles[i][0];
    if (up) {
        add("rect", { x: x - 0.5, y: 690.5 - h, width: 2, height: h, fill: UP_FILL, stroke: UP });
    } else {
        add("rect", { x: x - 1.25, y: 691 - h, width: 3.5, height: h, fill: DOWN });
    }
});
curve(volMagenta, "#cc3cd4");
curve(volYellow, "#f4f44c");

// macd pane
macdBars.forEach(function (v, i) {
    if (v !== 0) {
        var x = xAt(i) + 0.5;
        line(x, 742, x, 742 - v, v > 0 ? UP : DOWN);
    }
});
curve(dif, "#ffffff", 1.2);
curve(dea, "#f4f44c", 1.2);

// frame lines
line(20, 573.5, 889, 573.5, LINE);
line(20, 691.5, 889, 691.5, LINE);
line(20, 769.5, 889, 769.5, LINE);
line(20, 785.5, 889, 785.5, LINE);
line(837.5, 49, 837.5, 786, LINE);
line(20.5, 49, 20.5, 786, LINE);
add("rect", { x: 838, y: 692.5, width: 49, height: 76, fill: "none", stroke: "#a01414", "stroke-width": 2 });

// right axis
var prices = [[22, 108], [21, 138], [20, 167], [19, 197], [18, 225], [17, 255], [16, 283], [15, 313], [14, 341], [13, 371], [12, 399], [11, 430], [10, 458], [9, 488], [8, 516]];
prices.forEach(function (p) {
    line(837, p[1] + 0.5, 843, p[1] + 0.5, LINE);
    text(884, p[1] + 5, p[0].toFixed(2), "#b84040");
});
[[75000, 606], [50000, 634], [25000, 661]].forEach(function (p) {
    line(837, p[1] + 0.5, 843, p[1] + 0.5, LINE);
    text(884, p[1] + 5, String(p[0]), "#b84040");
});
[620, 647, 675].forEach(function (y) {
    line(837, y + 0.5, 840, y + 0.5, LINE);
});
[[2, 716], [0, 742]].forEach(function (p) {
    line(838, p[1] + 0.5, 843, p[1] + 0.5, LINE);
    text(884, p[1] + 5, p[0].toFixed(2), "#b84040");
});
add("rect", { x: 840.5, y: 678.5, width: 23, height: 13, fill: "#000", stroke: LINE });
text(852, 690, "X10", "#b84040", "middle");

// time axis
var months = [[94, "2"], [126, "4"], [167, "6"], [209, "8"], [250, "10"], [283, "12"], [325, "2"], [365, "4"], [402, "6"], [443, "8"], [484, "10"], [516, "12"], [557, "2"], [598, "4"], [635, "6"], [675, "8"], [716, "10"], [754, "12"], [791, "2"]];
months.forEach(function (m) {
    line(m[0] + 0.5, 769, m[0] + 0.5, 785, LINE);
    text(m[0] + 3, 782, m[1], "#c84040", "start");
});
for (var tx = 30; tx < 835; tx += 18.3) {
    line(Math.round(tx) + 0.5, 770, Math.round(tx) + 0.5, 772, LINE);
}
text(22, 782, "2014年", "#c84040", "start");
text(861, 782, "周线", "#bdbdbd", "middle");
```
